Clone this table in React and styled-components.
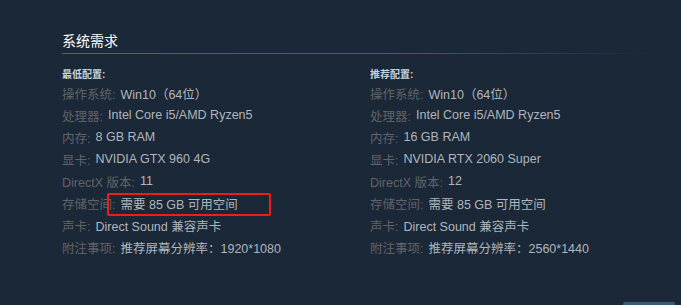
import React from "react";
import styled, { createGlobalStyle } from "styled-components";

const GlobalStyle = createGlobalStyle`
  html, body {
    margin: 0;
    padding: 0;
    background: #1b2838;
  }
  body {
    font-family: "Liberation Sans", Arial, "Noto Sans CJK SC", sans-serif;
  }
`;

const Page = styled.div`
  width: 681px;
  height: 305px;
  box-sizing: border-box;
  padding: 32px 0 0 62px;
  background: #1b2838;
  overflow: hidden;
  position: relative;
`;

const Title = styled.h2`
  margin: 0;
  width: 590px;
  height: 22px;
  font-size: 14px;
  line-height: 18px;
  font-weight: normal;
  color: #ffffff;
  background-image: linear-gradient(
    to right,
    #3a6a8a 0%,
    #356381 55%,
    rgba(53, 99, 129, 0) 100%
  );
  background-size: 100% 1px;
  background-repeat: no-repeat;
  background-position: left bottom;
`;

const Columns = styled.div`
  display: grid;
  grid-template-columns: 308px 300px;
  margin-top: 14px;
`;

const Col = styled.div`
  display: flex;
  flex-direction: column;
`;

const ColHead = styled.strong`
  font-size: 10px;
  line-height: 14px;
  font-weight: bold;
  color: #c6d4df;
`;

const Row = styled.div`
  position: relative;
  display: flex;
  align-items: center;
  height: 22px;
  font-size: 12.5px;
  white-space: nowrap;
`;

const Label = styled.span`
  color: #626366;
  margin-right: 5px;
`;

const Value = styled.span`
  color: #b0b6bc;
`;

const Highlight = styled.div`
  position: absolute;
  left: 45px;
  top: 1px;
  width: 160px;
  height: 19px;
  border: 2px solid #f01c1c;
  border-radius: 2px;
  pointer-events: none;
`;

const CornerButton = styled.div`
  position: absolute;
  right: 6px;
  bottom: -10px;
  width: 52px;
  height: 13px;
  background: #3a5a73;
  border-radius: 2px;
`;

const minimum = [
  ["操作系统:", "Win10（64位）"],
  ["处理器:", "Intel Core i5/AMD Ryzen5"],
  ["内存:", "8 GB RAM"],
  ["显卡:", "NVIDIA GTX 960 4G"],
  ["DirectX 版本:", "11"],
  ["存储空间:", "需要 85 GB 可用空间", true],
  ["声卡:", "Direct Sound 兼容声卡"],
  ["附注事项:", "推荐屏幕分辨率：1920*1080"],
];

const recommended = [
  ["操作系统:", "Win10（64位）"],
  ["处理器:", "Intel Core i5/AMD Ryzen5"],
  ["内存:", "16 GB RAM"],
  ["显卡:", "NVIDIA RTX 2060 Super"],
  ["DirectX 版本:", "12"],
  ["存储空间:", "需要 85 GB 可用空间"],
  ["声卡:", "Direct Sound 兼容声卡"],
  ["附注事项:", "推荐屏幕分辨率：2560*1440"],
];

const ReqColumn = ({ heading, rows }) => (
  <Col>
    <ColHead>{heading}</ColHead>
    {rows.map(([label, value, marked]) => (
      <Row key={label}>
        <Label>{label}</Label>
        <Value>{value}</Value>
        {marked && <Highlight />}
      </Row>
    ))}
  </Col>
);

export default function App() {
  return (
    <Page>
      <GlobalStyle />
      <Title>系统需求</Title>
      <Columns>
        <ReqColumn heading="最低配置:" rows={minimum} />
        <ReqColumn heading="推荐配置:" rows={recommended} />
      </Columns>
      <CornerButton />
    </Page>
  );
}
